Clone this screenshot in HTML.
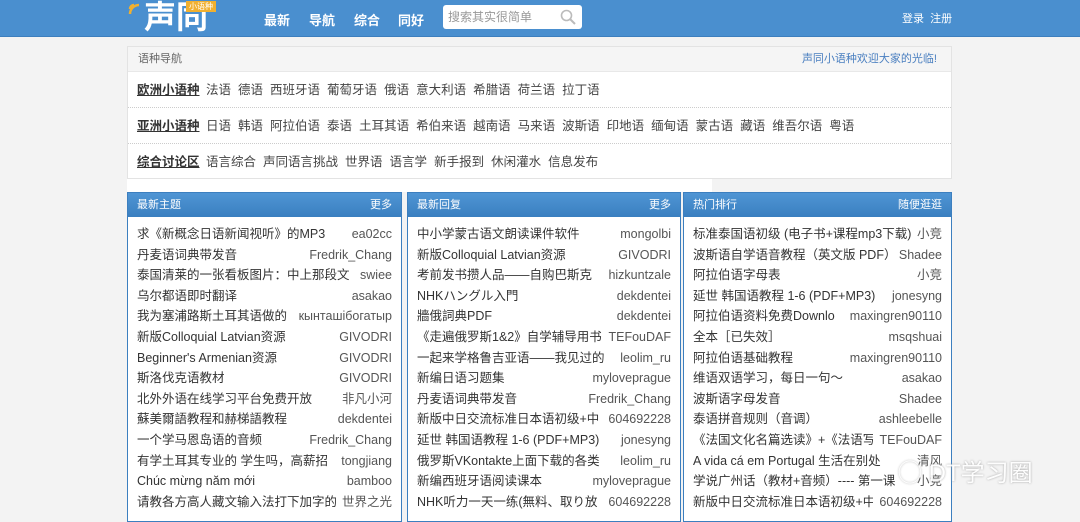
<!DOCTYPE html>
<html><head><meta charset="utf-8">
<style>
*{margin:0;padding:0;box-sizing:border-box}
body{width:1080px;height:516px;overflow:hidden;background:#f3f3f3;font-family:"Liberation Sans","Noto Sans CJK SC",sans-serif;color:#333}
.hd{position:absolute;left:0;top:0;width:1080px;height:37px;background:#4a8fcf;border-bottom:1px solid #3d7fbe}
.logo{position:absolute;left:144px;top:-2px;color:#fff;font-size:32px;font-weight:bold;line-height:38px;letter-spacing:0px}
.wifi{position:absolute;left:127px;top:0px}
.tag{position:absolute;left:186px;top:1px;background:#f0b030;color:#fff;font-size:8px;padding:0 3px;line-height:11px}
.nav{position:absolute;top:10px;color:#fff;font-size:13px;font-weight:bold}
.search{position:absolute;left:443px;top:5px;width:139px;height:24px;background:#fff;border-radius:3px;color:#999;font-size:12px;line-height:24px;padding-left:5px}
.search svg{position:absolute;right:6px;top:4px}
.login{position:absolute;left:902px;top:10px;color:#fff;font-size:11px}
.box{position:absolute;left:127px;top:46px;width:825px;height:133px;background:#fff;border:1px solid #e3e3e3}
.bh{height:25px;background:#f5f5f5;border-bottom:1px solid #e8e8e8;font-size:11px;color:#666;line-height:25px;padding-left:10px;position:relative}
.bh span{position:absolute;right:14px;color:#4a7fc0}
.row{height:36px;line-height:36px;padding-left:9px;font-size:12.5px;color:#444;border-bottom:1px dotted #ccc;white-space:nowrap}
.row:last-child{border-bottom:0}
.row b{text-decoration:underline;color:#333;margin-right:3px}
.row i{font-style:normal;margin-right:7px}
.white{position:absolute;left:127px;top:179px;width:585px;height:13px;background:#fff}
.p{position:absolute;top:192px;height:330px;background:#fff;border:1px solid #3c7fbf}
.ph{height:24px;background:linear-gradient(#4f95d4,#3a7fc0);color:#fff;font-size:11px;line-height:24px;padding:0 9px;position:relative}
.ph span{position:absolute;right:9px}
.ul{padding:7px 9px 0 9px}
.li{height:20.6px;line-height:20.6px;font-size:12.5px;color:#333;position:relative;white-space:nowrap;overflow:hidden}
.li span{position:absolute;right:0;top:0;background:#fff;padding-left:6px;color:#555}
.wm{position:absolute;left:898px;top:453px;color:#fff;font-size:24px;text-shadow:0 0 2px #999;opacity:.9}
</style></head><body>
<div class="hd">
 <svg class="wifi" width="22" height="16" viewBox="0 0 22 16"><path d="M3 14a9 9 0 0 1 9-9M3 9a4 4 0 0 1 4-4" fill="none" stroke="#f0b030" stroke-width="2.5"/></svg>
 <div class="logo">声同</div><div class="tag">小语种</div>
 <div class="nav" style="left:264px">最新</div>
 <div class="nav" style="left:309px">导航</div>
 <div class="nav" style="left:354px">综合</div>
 <div class="nav" style="left:398px">同好</div>
 <div class="search">搜索其实很简单<svg width="16" height="16" viewBox="0 0 16 16"><circle cx="6.5" cy="6.5" r="5" fill="none" stroke="#bbb" stroke-width="1.6"/><path d="M10 10l5 5" stroke="#bbb" stroke-width="2"/></svg></div>
 <div class="login">登录&nbsp;&nbsp;注册</div>
</div>
<div class="box">
 <div class="bh">语种导航<span>声同小语种欢迎大家的光临!</span></div>
 <div class="row"><b>欧洲小语种</b> <i>法语</i><i>德语</i><i>西班牙语</i><i>葡萄牙语</i><i>俄语</i><i>意大利语</i><i>希腊语</i><i>荷兰语</i><i>拉丁语</i></div>
 <div class="row"><b>亚洲小语种</b> <i>日语</i><i>韩语</i><i>阿拉伯语</i><i>泰语</i><i>土耳其语</i><i>希伯来语</i><i>越南语</i><i>马来语</i><i>波斯语</i><i>印地语</i><i>缅甸语</i><i>蒙古语</i><i>藏语</i><i>维吾尔语</i><i>粤语</i></div>
 <div class="row"><b>综合讨论区</b> <i>语言综合</i><i>声同语言挑战</i><i>世界语</i><i>语言学</i><i>新手报到</i><i>休闲灌水</i><i>信息发布</i></div>
</div>
<div class="white"></div>

<div class="p" style="left:127px;width:275px">
 <div class="ph">最新主题<span>更多</span></div>
 <div class="ul">
  <div class="li">求《新概念日语新闻视听》的MP3<span>ea02cc</span></div>
  <div class="li">丹麦语词典带发音<span>Fredrik_Chang</span></div>
  <div class="li">泰国清莱的一张看板图片：中上那段文<span>swiee</span></div>
  <div class="li">乌尔都语即时翻译<span>asakao</span></div>
  <div class="li">我为塞浦路斯土耳其语做的<span>кынташiбогатыр</span></div>
  <div class="li">新版Colloquial Latvian资源<span>GIVODRI</span></div>
  <div class="li">Beginner's Armenian资源<span>GIVODRI</span></div>
  <div class="li">斯洛伐克语教材<span>GIVODRI</span></div>
  <div class="li">北外外语在线学习平台免费开放<span>非凡小河</span></div>
  <div class="li">蘇美爾語教程和赫梯語教程<span>dekdentei</span></div>
  <div class="li">一个学马恩岛语的音频<span>Fredrik_Chang</span></div>
  <div class="li">有学土耳其专业的 学生吗，高薪招<span>tongjiang</span></div>
  <div class="li">Chúc mừng năm mới<span>bamboo</span></div>
  <div class="li">请教各方高人藏文输入法打下加字的<span>世界之光</span></div>
 </div>
</div>
<div class="p" style="left:407px;width:274px">
 <div class="ph">最新回复<span>更多</span></div>
 <div class="ul">
  <div class="li">中小学蒙古语文朗读课件软件<span>mongolbi</span></div>
  <div class="li">新版Colloquial Latvian资源<span>GIVODRI</span></div>
  <div class="li">考前发书攒人品——自购巴斯克<span>hizkuntzale</span></div>
  <div class="li">NHKハングル入門<span>dekdentei</span></div>
  <div class="li">牆俄詞典PDF<span>dekdentei</span></div>
  <div class="li">《走遍俄罗斯1&amp;2》自学辅导用书<span>TEFouDAF</span></div>
  <div class="li">一起来学格鲁吉亚语——我见过的<span>leolim_ru</span></div>
  <div class="li">新编日语习题集<span>myloveprague</span></div>
  <div class="li">丹麦语词典带发音<span>Fredrik_Chang</span></div>
  <div class="li">新版中日交流标准日本语初级+中<span>604692228</span></div>
  <div class="li">延世 韩国语教程 1-6 (PDF+MP3)<span>jonesyng</span></div>
  <div class="li">俄罗斯VKontakte上面下载的各类<span>leolim_ru</span></div>
  <div class="li">新编西班牙语阅读课本<span>myloveprague</span></div>
  <div class="li">NHK听力一天一练(無料、取り放<span>604692228</span></div>
 </div>
</div>
<div class="p" style="left:683px;width:269px">
 <div class="ph">热门排行<span>随便逛逛</span></div>
 <div class="ul">
  <div class="li">标准泰国语初级 (电子书+课程mp3下载)<span>小竞</span></div>
  <div class="li">波斯语自学语音教程（英文版 PDF）<span>Shadee</span></div>
  <div class="li">阿拉伯语字母表<span>小竞</span></div>
  <div class="li">延世 韩国语教程 1-6 (PDF+MP3)<span>jonesyng</span></div>
  <div class="li">阿拉伯语资料免费Downlo<span>maxingren90110</span></div>
  <div class="li">全本［已失效］<span>msqshuai</span></div>
  <div class="li">阿拉伯语基础教程<span>maxingren90110</span></div>
  <div class="li">维语双语学习，每日一句～<span>asakao</span></div>
  <div class="li">波斯语字母发音<span>Shadee</span></div>
  <div class="li">泰语拼音规则（音调）<span>ashleebelle</span></div>
  <div class="li">《法国文化名篇选读》+《法语写<span>TEFouDAF</span></div>
  <div class="li">A vida cá em Portugal 生活在别处<span>清风</span></div>
  <div class="li">学说广州话（教材+音频）---- 第一课<span>小竞</span></div>
  <div class="li">新版中日交流标准日本语初级+中<span>604692228</span></div>
 </div>
</div>
<div class="wm">◯ DT学习圈</div>
</body></html>
